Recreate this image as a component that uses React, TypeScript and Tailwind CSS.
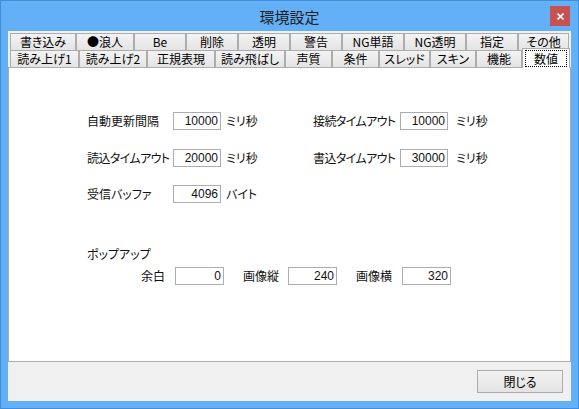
import React from 'react';

type Tab = { label: string; w: string; selected?: boolean };

const row1: Tab[] = [
  { label: '書き込み', w: 'w-[66px]' },
  { label: '●浪人', w: 'w-[58px]' },
  { label: 'Be', w: 'w-[52px]' },
  { label: '削除', w: 'w-[52px]' },
  { label: '透明', w: 'w-[52px]' },
  { label: '警告', w: 'w-[52px]' },
  { label: 'NG単語', w: 'w-[62px]' },
  { label: 'NG透明', w: 'w-[62px]' },
  { label: '指定', w: 'w-[52px]' },
  { label: 'その他', w: 'w-[51px]' },
];

const row2: Tab[] = [
  { label: '読み上げ1', w: 'w-[69px]' },
  { label: '読み上げ2', w: 'w-[68px]' },
  { label: '正規表現', w: 'w-[68px]' },
  { label: '読み飛ばし', w: 'w-[70px]' },
  { label: '声質', w: 'w-[47px]' },
  { label: '条件', w: 'w-[47px]' },
  { label: 'スレッド', w: 'w-[51px]' },
  { label: 'スキン', w: 'w-[46px]' },
  { label: '機能', w: 'w-[46px]' },
  { label: '数値', w: 'w-[48px]', selected: true },
];

function TabButton({ tab }: { tab: Tab }) {
  if (tab.selected) {
    return (
      <div
        className={`${tab.w} relative z-10 -mt-[2px] h-[20px] shrink-0 border border-b-0 border-[#acacac] bg-white px-[2px] pt-[1px]`}
      >
        <div className="flex h-[17px] items-center justify-center whitespace-nowrap border border-dotted border-black text-[12px] leading-none">
          {tab.label}
        </div>
      </div>
    );
  }
  return (
    <div
      className={`${tab.w} flex h-[17px] shrink-0 items-center justify-center whitespace-nowrap border border-b-0 border-[#acacac] bg-linear-to-b from-[#f3f3f3] to-[#e4e4e4] text-[12px] leading-none`}
    >
      {tab.label}
    </div>
  );
}

function NumBox({ value, w = 'w-[48px]' }: { value: string; w?: string }) {
  return (
    <div
      className={`${w} flex h-[18px] shrink-0 items-center justify-end border border-[#abadb3] bg-white pr-[2px] font-[family-name:'Liberation_Sans_Narrow','Liberation_Sans',sans-serif] text-[12px] leading-none`}
    >
      {value}
    </div>
  );
}

export default function App() {
  return (
    <div className="flex h-[409px] w-[579px] flex-col border border-[#3f8fdc] bg-[#63b0f6] font-[family-name:'Noto_Sans_CJK_JP',sans-serif] text-black [font-feature-settings:'palt']">
      {/* title bar */}
      <div className="relative flex h-[30px] shrink-0 items-center justify-center">
        <span className="text-[15px] leading-none text-[#1e1e1e]">環境設定</span>
        <div className="absolute right-[8px] top-[5px] flex h-[20px] w-[20px] items-center justify-center bg-[#c75050]">
          <svg width="7" height="7" viewBox="0 0 7 7">
            <path d="M0.5 0.5 L6.5 6.5 M6.5 0.5 L0.5 6.5" stroke="white" strokeWidth="1.6" />
          </svg>
        </div>
      </div>

      {/* client area */}
      <div className="mx-[7px] mb-[7px] flex flex-1 flex-col bg-[#f0f0f0]">
        <div className="pl-[2px] pt-[2px]">
          <div className="flex h-[17px]">
            {row1.map((t) => (
              <TabButton key={t.label} tab={t} />
            ))}
          </div>
          <div className="flex h-[17px] items-start">
            {row2.map((t) => (
              <TabButton key={t.label} tab={t} />
            ))}
          </div>
        </div>

        <div className="h-[295px] shrink-0 whitespace-nowrap border border-[#acacac] bg-white pl-[78px] pt-[44px] text-[12px] text-[#111]">
          <div className="flex h-[18px] items-center">
            <span className="w-[86px] shrink-0">自動更新間隔</span>
            <NumBox value="10000" />
            <span className="ml-[5px] w-[87px] shrink-0">ミリ秒</span>
            <span className="w-[87px] shrink-0 tracking-[-0.6px]">接続タイムアウト</span>
            <NumBox value="10000" />
            <span className="ml-[8px]">ミリ秒</span>
          </div>
          <div className="mt-[19px] flex h-[18px] items-center">
            <span className="w-[86px] shrink-0 tracking-[-0.6px]">読込タイムアウト</span>
            <NumBox value="20000" />
            <span className="ml-[5px] w-[87px] shrink-0">ミリ秒</span>
            <span className="w-[87px] shrink-0 tracking-[-0.6px]">書込タイムアウト</span>
            <NumBox value="30000" />
            <span className="ml-[8px]">ミリ秒</span>
          </div>
          <div className="mt-[18px] flex h-[18px] items-center">
            <span className="w-[86px] shrink-0">受信バッファ</span>
            <NumBox value="4096" />
            <span className="ml-[5px]">バイト</span>
          </div>

          <div className="mt-[42px] flex h-[18px] items-center">ポップアップ</div>
          <div className="mt-[4px] flex h-[18px] items-center pl-[54px]">
            <span className="w-[34px] shrink-0">余白</span>
            <NumBox value="0" w="w-[49px]" />
            <span className="ml-[19px] w-[45px] shrink-0">画像縦</span>
            <NumBox value="240" w="w-[49px]" />
            <span className="ml-[19px] w-[46px] shrink-0">画像横</span>
            <NumBox value="320" w="w-[49px]" />
          </div>
        </div>

        <div className="flex flex-1 items-start justify-end pr-[8px] pt-[8px]">
          <button
            type="button"
            className="flex h-[23px] w-[86px] items-center justify-center border border-[#acacac] bg-linear-to-b from-[#f2f2f2] to-[#e3e3e3] text-[12px] leading-none"
          >
            閉じる
          </button>
        </div>
      </div>
    </div>
  );
}
